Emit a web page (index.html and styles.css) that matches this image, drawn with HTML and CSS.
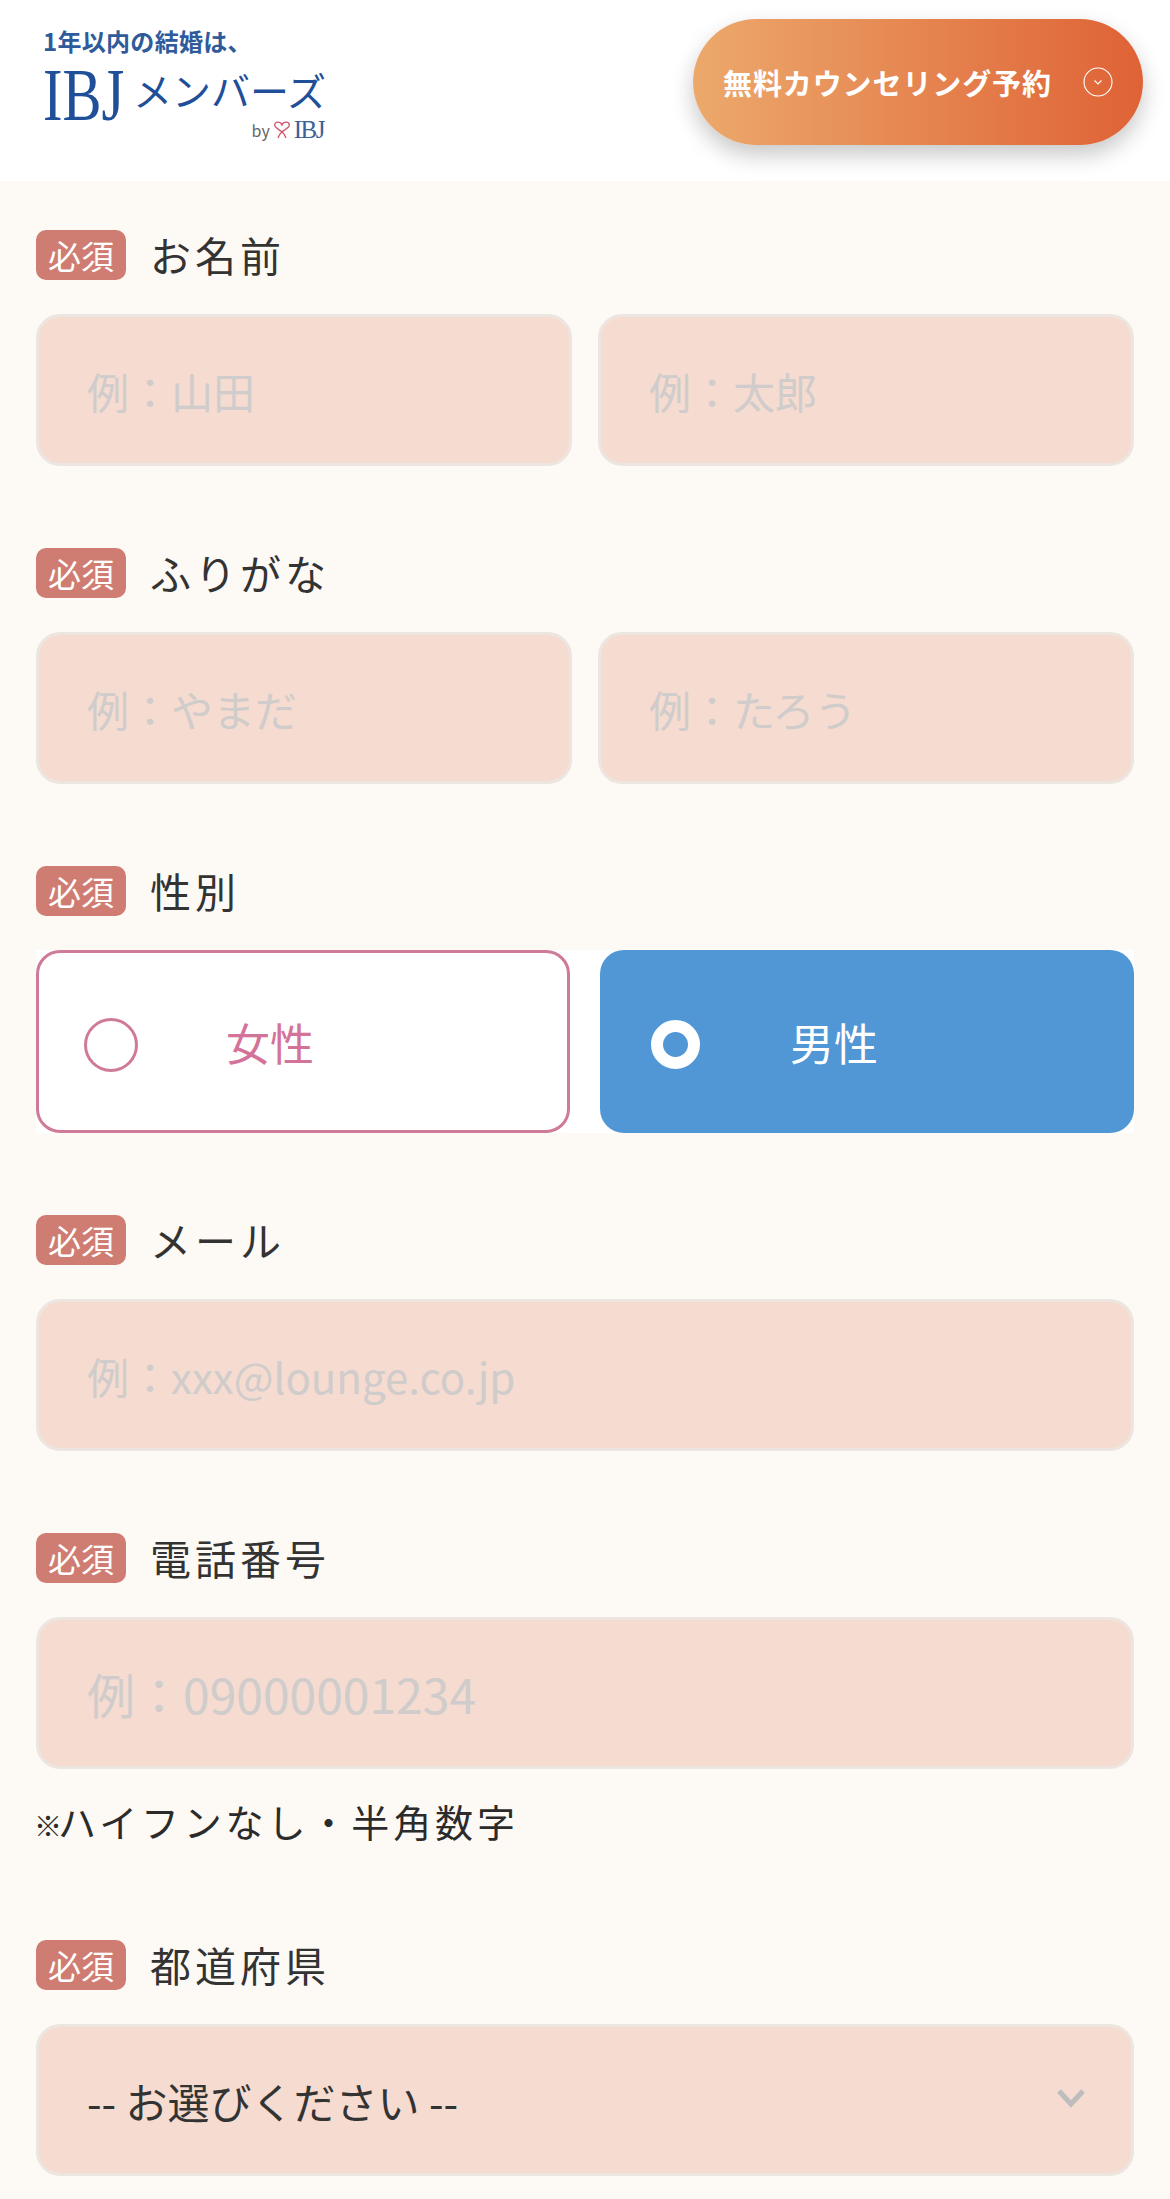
FILE: index.html
```html
<!DOCTYPE html>
<html lang="ja">
<head>
  <meta charset="UTF-8" />
  <meta name="viewport" content="width=device-width, initial-scale=1.0" />
  <title>無料カウンセリング予約</title>
  <link rel="stylesheet" href="styles.css">
</head>
<body>
<header class="header">
  <a class="logo" href="#">
    <span class="logo-catch">1年以内の結婚は、</span>
    <span class="logo-main"><span class="logo-ibj">IBJ</span><span class="logo-members">メンバーズ</span></span>
    <span class="logo-by">
      by
      <svg class="logo-heart" viewBox="0 0 16 16" width="18" height="18" fill="none" stroke="#d2566a" stroke-width="1.2">
        <path d="M8 9.5C5 7.5 1.5 6 1.5 3.6 1.5 1.8 3 1 4.3 1 6 1 7.4 2 8 3.5 8.6 2 10 1 11.7 1 13 1 14.5 1.8 14.5 3.6 14.5 6 11 7.5 8 9.5 6.8 10.5 5.5 12.5 4.5 15M8 9.5c1.2 1 2.5 3 3.5 5.5"/>
      </svg>
      <span class="logo-by-ibj">IBJ</span>
    </span>
  </a>
  <a class="cta" href="#">
    <span>無料カウンセリング予約</span>
    <svg class="cta-icon" viewBox="0 0 30 30" width="30" height="30" fill="none" stroke="#fff" stroke-width="1.1">
      <circle cx="15" cy="15" r="14"/>
      <path d="M11.5 13.5 15 17l3.5-3.5"/>
    </svg>
  </a>
</header>

<form class="form">
  <div class="field">
    <div class="field-label"><span class="badge">必須</span>お名前</div>
    <div class="pair">
      <input class="text-input" type="text" placeholder="例：山田" />
      <input class="text-input" type="text" placeholder="例：太郎" />
    </div>
  </div>

  <div class="field">
    <div class="field-label"><span class="badge">必須</span>ふりがな</div>
    <div class="pair">
      <input class="text-input" type="text" placeholder="例：やまだ" />
      <input class="text-input" type="text" placeholder="例：たろう" />
    </div>
  </div>

  <div class="field">
    <div class="field-label"><span class="badge">必須</span>性別</div>
    <div class="gender">
      <label class="gender-item gender-female"><span class="radio"></span>女性</label>
      <label class="gender-item gender-male"><span class="radio"></span>男性</label>
    </div>
  </div>

  <div class="field">
    <div class="field-label"><span class="badge">必須</span>メール</div>
    <input class="text-input" type="text" placeholder="例：xxx@lounge.co.jp" />
  </div>

  <div class="field field-noted">
    <div class="field-label"><span class="badge">必須</span>電話番号</div>
    <input class="text-input text-input-tel" type="text" placeholder="例：09000001234" />
    <p class="note"><span class="note-mark">※</span>ハイフンなし・半角数字</p>
  </div>

  <div class="field">
    <div class="field-label"><span class="badge">必須</span>都道府県</div>
    <div class="select-wrap">
      <select class="select">
        <option>-- お選びください --</option>
      </select>
      <svg class="select-arrow" viewBox="0 0 30 20" width="30" height="20" fill="none" stroke="#bdbdbd" stroke-width="5">
        <path d="M3 3l12 13L27 3"/>
      </svg>
    </div>
  </div>
</form>
</body>
</html>
```

FILE: styles.css
```css
html,body{margin:0;padding:0;background:#fdfaf6;color:#333;font-family:"Noto Sans CJK JP","Noto Sans",sans-serif;}
a{text-decoration:none;}

/* header */
.header{height:181px;box-sizing:border-box;background:#fff;display:flex;justify-content:space-between;padding:19px 27px 0 43px;}
.logo{display:flex;flex-direction:column;width:281px;color:#24528f;}
.logo-catch{font-size:24px;line-height:26px;font-weight:700;letter-spacing:.3px;margin-top:9px;color:#2f5b9b;}
.logo-main{display:flex;align-items:flex-end;height:66px;margin-top:4px;white-space:nowrap;}
.logo-ibj{display:inline-block;width:81px;margin:0 9px -4px 0;font-family:"Liberation Serif",serif;font-size:75px;line-height:66px;transform:scaleX(.78);transform-origin:left center;color:#1f4f98;}
.logo-members{margin-bottom:7px;font-size:39px;line-height:56px;color:#1f4f98;}
.logo-by{display:flex;align-items:center;justify-content:flex-end;gap:3px;font-size:16px;line-height:22px;color:#666;margin-top:-5px;}
.logo-heart{display:block;}
.logo-by-ibj{font-family:"Liberation Serif",serif;font-size:25px;letter-spacing:-1.5px;color:#3d6299;}
.cta{width:450px;height:126px;border-radius:63px;background:linear-gradient(90deg,#eca96c,#df6236);box-shadow:0 10px 22px rgba(0,0,0,.22);display:flex;align-items:center;justify-content:space-between;box-sizing:border-box;padding:0 30px;color:#fff;font-size:29px;font-weight:700;letter-spacing:.9px;}
.cta-icon{display:block;flex:none;}

/* form */
.form{padding:49px 36px 0;}
.field{margin-bottom:82px;}
.field-noted{margin-bottom:0;padding-bottom:93px;}
.field-label{display:flex;align-items:center;height:47px;padding-bottom:3px;margin-bottom:34px;font-size:41px;letter-spacing:4px;color:#333;}
.badge{width:90px;height:50px;margin:0 24px -3px 0;border-radius:10px;background:#cf7d72;color:#fff;font-size:33px;letter-spacing:0;line-height:50px;text-align:center;}
.pair{display:grid;grid-template-columns:1fr 1fr;gap:26px;}
.text-input{display:block;width:100%;height:152px;box-sizing:border-box;padding:0 48px;border:3px solid #ede6e0;border-radius:24px;background:#f5dbd0;font-family:inherit;font-size:42px;color:#333;outline:none;}
.text-input-tel{font-size:48px;}
.text-input::placeholder{color:#cfcccb;opacity:1;}
.note{height:52px;margin:26px 0 0;font-size:38px;line-height:52px;letter-spacing:3.9px;color:#2b2b2b;}
.note-mark{margin-left:-2px;font-size:28px;line-height:1;font-weight:700;letter-spacing:-4px;}

/* gender */
.gender{display:grid;grid-template-columns:1fr 1fr;gap:30px;background:#fff;}
.gender-item{display:flex;align-items:center;height:183px;box-sizing:border-box;border-radius:24px;font-size:44px;}
.gender-female{border:3px solid #cf7a98;color:#d4739a;padding-left:45px;background:#fff;}
.gender-male{background:#5197d5;color:#fff;padding-left:51px;}
.radio{flex:none;display:block;box-sizing:border-box;border-radius:50%;}
.gender-female .radio{width:54px;height:54px;border:3px solid #cf7a98;margin:6px 88px 0 0;}
.gender-male .radio{width:49px;height:49px;border:12px solid #fff;background:#5197d5;margin:6px 90px 0 0;}

/* select */
.select-wrap{position:relative;}
.select{display:block;width:100%;height:152px;box-sizing:border-box;padding:0 48px;border:3px solid #ede6e0;border-radius:24px;background:#f5dbd0;font-family:inherit;font-size:42px;color:#333;appearance:none;-webkit-appearance:none;outline:none;}
.select-arrow{position:absolute;right:48px;top:64px;}
```
